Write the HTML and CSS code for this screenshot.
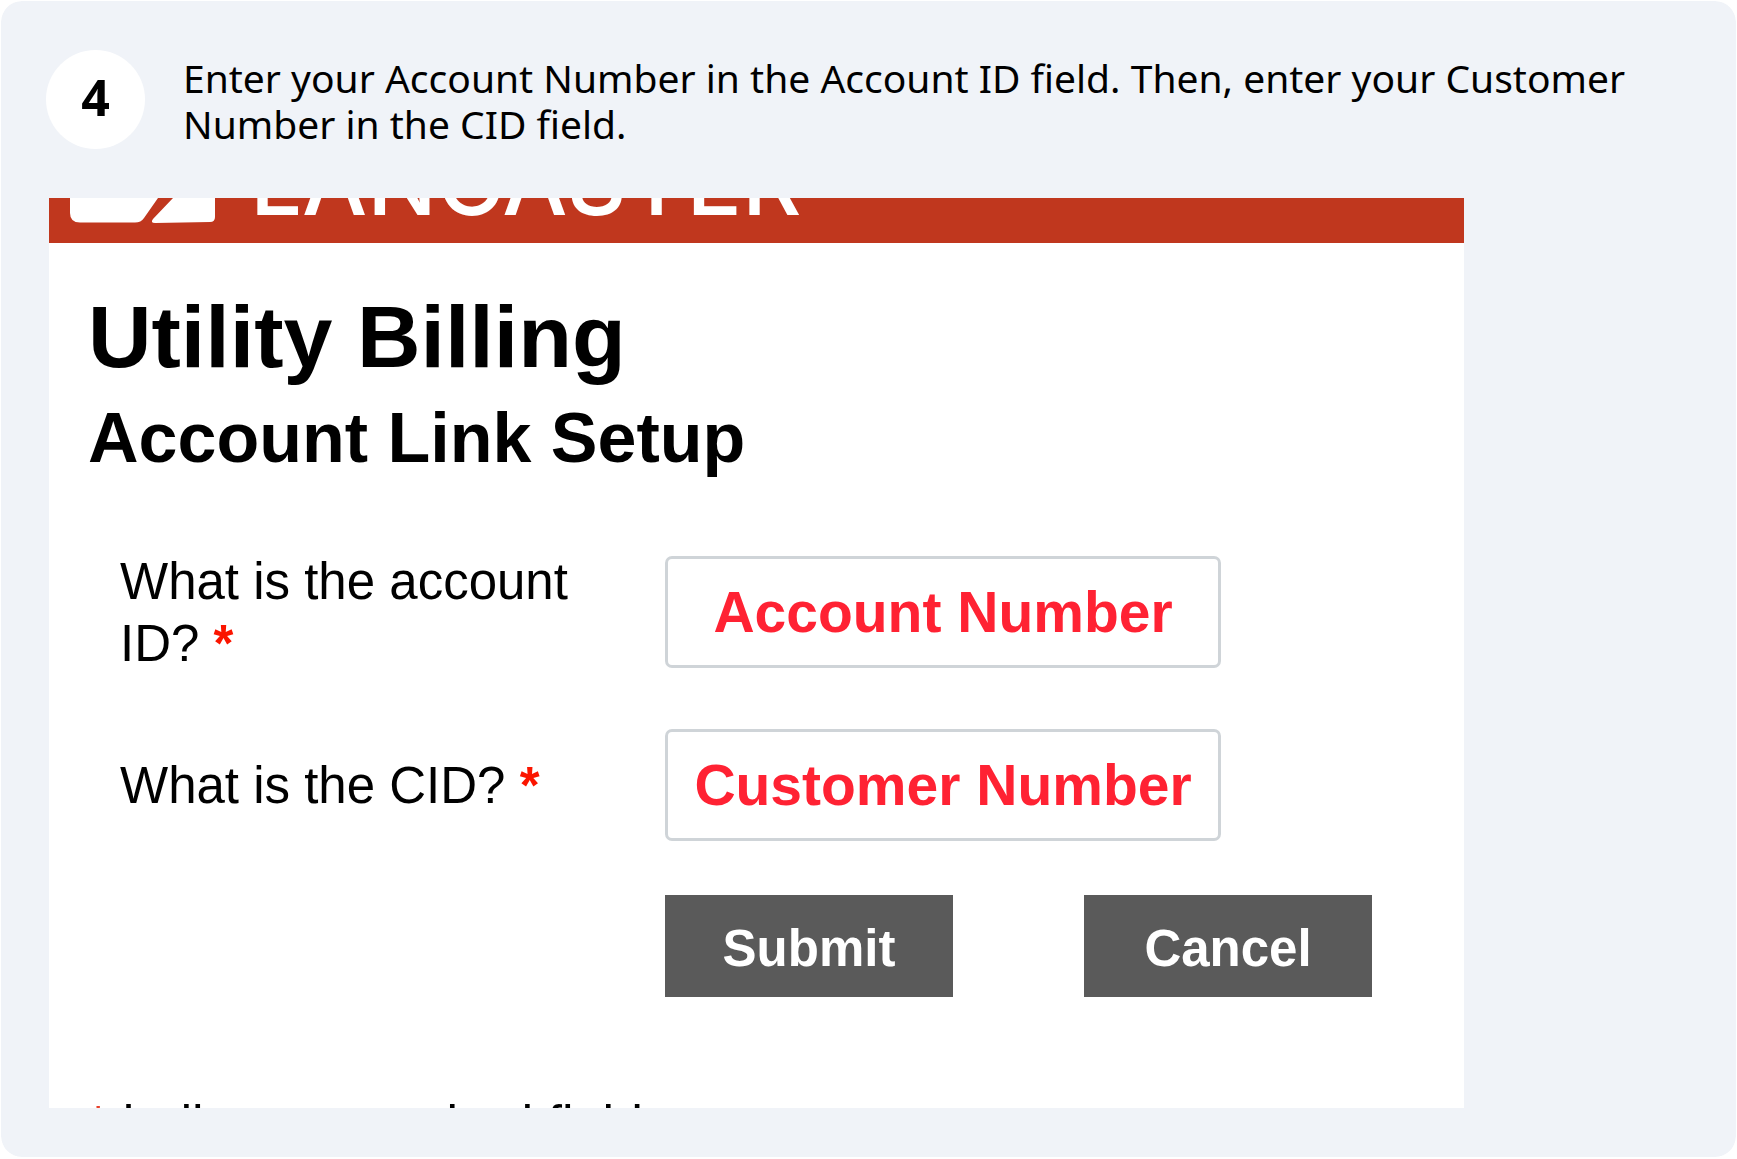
FILE: index.html
```html
<!DOCTYPE html>
<html lang="en">
<head>
  <meta charset="utf-8">
  <title>Utility Billing: Account Link Setup</title>
  <link rel="stylesheet" href="styles.css">
</head>
<body>
  <main class="step">
    <header class="step-header">
      <span class="step-number">4</span>
      <p class="step-text">Enter your Account Number in the Account ID field. Then, enter your Customer Number in the CID field.</p>
    </header>

    <section class="panel">
      <div class="brand">
        <svg class="brand-mark" viewBox="0 0 146 26" aria-hidden="true">
          <path d="M0 0H88L74 20Q71 24.500 65 24.500H10Q0 24.500 0 15Z"/>
          <path d="M103 0H145V19Q145 24 140 24L85 25Q80 25 83 21Z"/>
        </svg>
        <span class="brand-name">LANCASTER</span>
      </div>

      <div class="panel-body">
        <h1 class="title">Utility Billing</h1>
        <h2 class="subtitle">Account Link Setup</h2>

        <form class="form">
          <label class="label" for="account-id">What is the account ID? <span class="required">*</span></label>
          <input class="field" id="account-id" type="text" value="Account Number">

          <label class="label" for="cid">What is the CID? <span class="required">*</span></label>
          <input class="field" id="cid" type="text" value="Customer Number">

          <div class="actions">
            <button class="button" type="submit">Submit</button>
            <button class="button" type="button">Cancel</button>
          </div>
        </form>

        <div class="footnote">
          <p class="footnote-text"><span class="footnote-mark">*</span> indicates required field</p>
        </div>
      </div>
    </section>
  </main>
</body>
</html>
```
FILE: styles.css
```css
* {
  box-sizing: border-box;
}

body {
  margin: 0;
  background: #fff;
  color: #000;
  font-family: "Liberation Sans", Arial, sans-serif;
}

h1,
h2,
p {
  margin: 0;
}

.step {
  padding: 49px 45px;
  border: 1px solid #fff;
  border-radius: 22px;
  background: #f0f3f8;
  background-clip: padding-box;
}

.step-header {
  display: flex;
  align-items: flex-start;
  gap: 38px;
  font-family: "Noto Sans", sans-serif;
}

.step-number {
  display: flex;
  flex: none;
  align-items: center;
  justify-content: center;
  width: 99px;
  height: 99px;
  padding-bottom: 6px;
  border-radius: 50%;
  background: #fff;
  font-size: 50px;
  font-weight: 700;
  line-height: 50px;
}

.step-text {
  padding-top: 5px;
  font-size: 39px;
  line-height: 46px;
}

.panel {
  max-width: 1415px;
  margin: 49px 0 0 3px;
  background: #fff;
}

.brand {
  display: flex;
  align-items: flex-end;
  gap: 34px;
  height: 45px;
  padding-left: 21px;
  overflow: hidden;
  background: #c0371e;
  color: #fff;
}

.brand-mark {
  flex: none;
  width: 146px;
  height: 26px;
  margin-bottom: 19px;
  fill: #fff;
}

.brand-name {
  margin-bottom: 20px;
  font-family: Inter, sans-serif;
  font-size: 92px;
  font-weight: 500;
  line-height: 82px;
}

.panel-body {
  padding: 48px 39px 0;
}

.title {
  font-size: 88px;
  line-height: 92px;
}

.subtitle {
  margin-top: 20px;
  font-size: 70px;
  line-height: 70px;
}

.form {
  display: grid;
  grid-template-columns: 545px 1fr;
  align-items: center;
  row-gap: 54px;
  margin-top: 76px;
  padding-left: 32px;
}

.label {
  padding: 2px 40px 0 0;
  font-size: 51px;
  line-height: 62px;
}

.required {
  color: #fb1500;
  font-weight: 700;
}

.field {
  width: 100%;
  max-width: 556px;
  height: 112px;
  padding: 0 16px;
  border: 3px solid #cfd4d8;
  border-radius: 7px;
  background: #fff;
  color: #ff2233;
  font: 700 57px "Liberation Sans", Arial, sans-serif;
  text-align: center;
}

.actions {
  display: flex;
  grid-column: 2;
  gap: 131px;
}

.button {
  width: 288px;
  height: 102px;
  padding: 4px 0 0;
  border: 0;
  background: #5a5a5a;
  color: #fff;
  font: 700 51px "Liberation Sans", Arial, sans-serif;
}

.footnote {
  height: 10px;
  margin-top: 101px;
  overflow: hidden;
}

.footnote-text {
  font-size: 52px;
  line-height: 52px;
}

.footnote-mark {
  color: #e8412c;
}
```
